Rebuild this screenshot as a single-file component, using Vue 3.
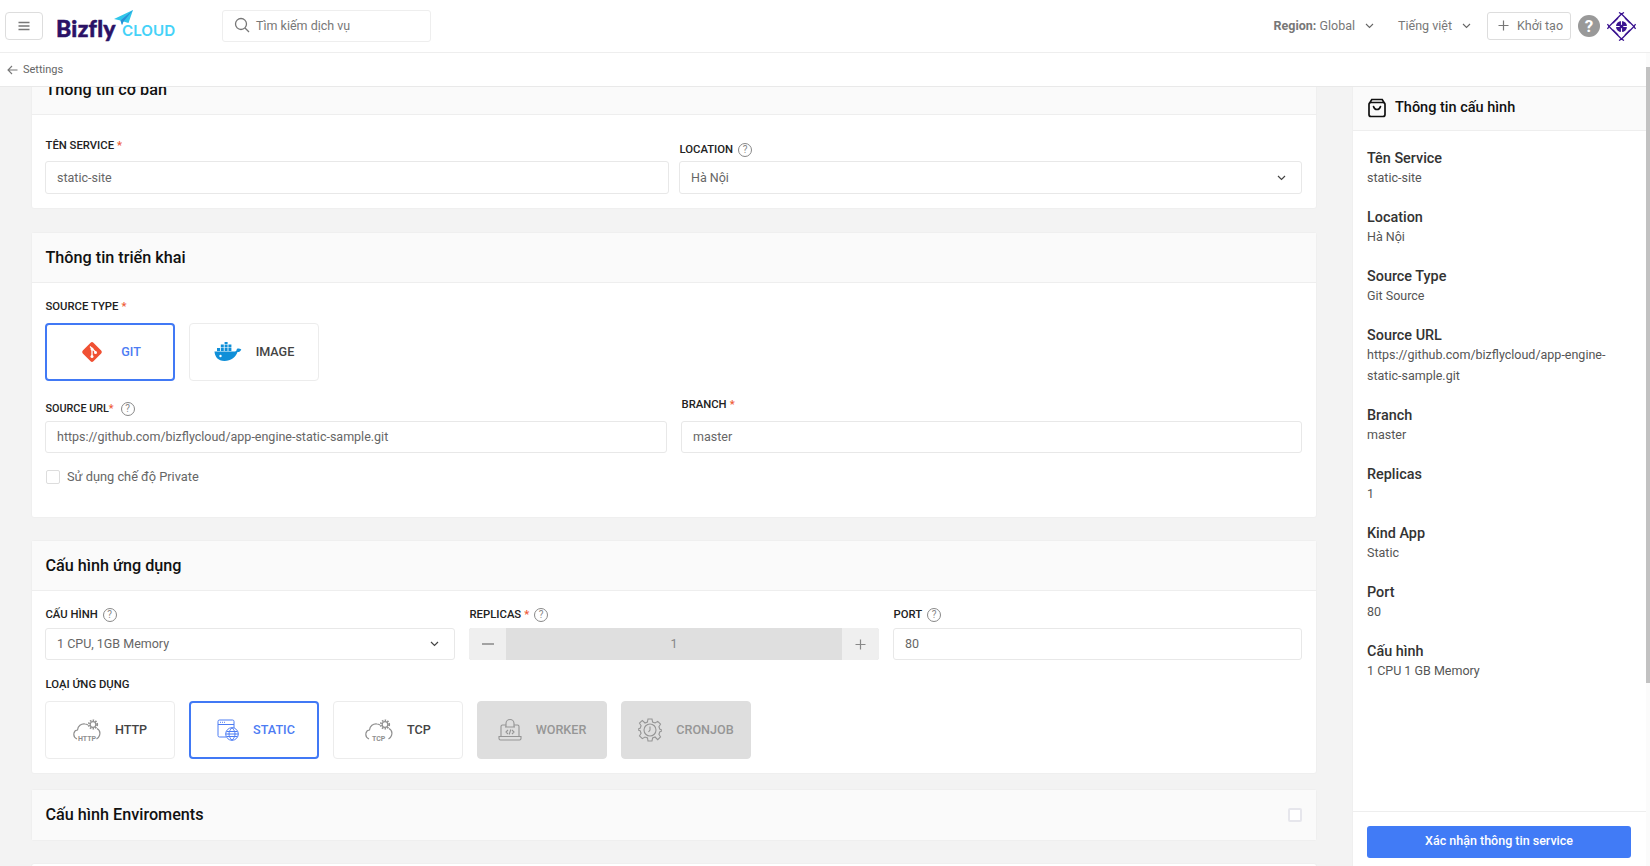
<script setup>
const basicInfo = [
  ['Tên Service', ['static-site']],
  ['Location', ['Hà Nội']],
  ['Source Type', ['Git Source']],
  ['Source URL', ['https://github.com/bizflycloud/app-engine-', 'static-sample.git']],
  ['Branch', ['master']],
  ['Replicas', ['1']],
  ['Kind App', ['Static']],
  ['Port', ['80']],
  ['Cấu hình', ['1 CPU 1 GB Memory']]
]
</script>

<template>
  <div class="page">
    <header class="top">
      <button class="menu" aria-label="menu">
        <svg width="12" height="10" viewBox="0 0 12 10"><path d="M.5 1.500h11M.5 5h11M.5 8.500h11" stroke="#777" stroke-width="1.400" fill="none"/></svg>
      </button>
      <div class="logo">
        <span class="biz">Bizfly</span>
        <span class="cloud">CLOUD</span>
        <svg class="plane" width="20" height="16" viewBox="0 0 20 16"><path d="M0 9 19 0 14.500 13 9.500 11.500 8 15 6.500 10.500Z" fill="#2fc6ea"/><path d="M6.500 10.500 19 0 9.500 11.500 8 15Z" fill="#2b8fd6"/></svg>
      </div>
      <div class="search">
        <svg width="16" height="16" viewBox="0 0 16 16" fill="none" stroke="#777" stroke-width="1.300"><circle cx="7" cy="7" r="5.500"/><path d="m11 11 4 4"/></svg>
        <span>Tìm kiếm dịch vụ</span>
      </div>
      <div class="spacer"></div>
      <div class="drop"><b>Region:</b>&nbsp;Global
        <svg class="chev" width="9" height="6" viewBox="0 0 9 6"><path d="m1 1 3.500 3.500L8 1" fill="none" stroke="#666" stroke-width="1.100"/></svg>
      </div>
      <div class="drop lang">Tiếng việt
        <svg class="chev" width="9" height="6" viewBox="0 0 9 6"><path d="m1 1 3.500 3.500L8 1" fill="none" stroke="#666" stroke-width="1.100"/></svg>
      </div>
      <div class="create">
        <svg width="11" height="11" viewBox="0 0 11 11"><path d="M5.500 .5v10M.5 5.500h10" stroke="#777" stroke-width="1.200"/></svg>
        <span>Khởi tạo</span>
      </div>
      <div class="qmark">?</div>
      <svg class="avatar" width="29" height="29" viewBox="0 0 29 29" fill="none" stroke="#3a1390" stroke-width="1.300">
        <path d="M14.500 2 27 14.500 14.500 27 2 14.500Z"/>
        <path d="M14.500 2 12 .5M14.500 2 17 .5M14.500 27 12 28.500M14.500 27 17 28.500M2 14.500 .5 12M2 14.500 .5 17M27 14.500 28.500 12M27 14.500 28.500 17"/>
        <path d="M6 11 11 6M18 6 23 11M6 18 11 23M18 23 23 18"/>
        <circle cx="14.500" cy="14.500" r="5.500" fill="#3a1390" stroke="none"/>
        <path d="M14.500 8v13M8 14.500h13" stroke="#fff" stroke-width="1.100"/>
        <circle cx="14.500" cy="14.500" r="1.800" fill="#3a1390" stroke="none"/>
      </svg>
    </header>

    <div class="crumb">
      <svg width="11" height="10" viewBox="0 0 11 10" fill="none" stroke="#777" stroke-width="1.100"><path d="M10.500 5H1M5 1 1 5l4 4"/></svg>
      <span>Settings</span>
    </div>

    <div class="track"><div class="thumb"></div></div>

    <div class="body">
      <main class="main">
        <section class="card first">
          <h2 class="card-head">Thông tin cơ bản</h2>
          <div class="card-body">
            <div class="row two">
              <div class="field">
                <label class="lab up4">TÊN SERVICE <i>*</i></label>
                <div class="input">static-site</div>
              </div>
              <div class="field">
                <label class="lab">LOCATION <span class="q">?</span></label>
                <div class="input select">Hà Nội
                  <svg width="9" height="6" viewBox="0 0 9 6"><path d="m1 1 3.500 3.500L8 1" fill="none" stroke="#444" stroke-width="1.200"/></svg>
                </div>
              </div>
            </div>
          </div>
        </section>

        <section class="card deploy">
          <h2 class="card-head">Thông tin triển khai</h2>
          <div class="card-body">
            <label class="lab plain">SOURCE TYPE <i>*</i></label>
            <div class="tiles">
              <div class="tile on git">
                <svg width="22" height="22" viewBox="0 0 22 22"><rect x="3.500" y="3.500" width="15" height="15" rx="2" transform="rotate(45 11 11)" fill="#f05033"/><path d="M9 5.500 15 11.500M11 8v8" stroke="#fff" stroke-width="1.300"/><circle cx="11" cy="8" r="1.500" fill="#fff"/><circle cx="11" cy="15.500" r="1.500" fill="#fff"/><circle cx="14.500" cy="11.500" r="1.500" fill="#fff"/></svg>
                <span>GIT</span>
              </div>
              <div class="tile">
                <svg width="28" height="20" viewBox="0 0 28 20" fill="#0f8fd8"><path d="M.5 9.500h20.500c1-.2 1.800-1.200 1.800-2.600 1.300-.8 3-.6 4.500.5-.6 1.700-2 2.600-3.800 2.600C21.500 15.500 17 19 10.500 19 4 19 .8 14.500.5 9.500Z"/><path d="M3 6h3v3H3zM6.800 6h3v3h-3zM10.600 6h3v3h-3zM14.400 6h3v3h-3zM6.800 2.500h3v3h-3zM10.600 2.500h3v3h-3zM14.400 2.500h3v3h-3zM10.600-1h3v3h-3z"/><circle cx="6.500" cy="14" r="1.200" fill="#fff"/></svg>
                <span>IMAGE</span>
              </div>
            </div>
            <div class="row two-b">
              <div class="field">
                <label class="lab url">SOURCE URL<i>*</i> <span class="q">?</span></label>
                <div class="input">https://github.com/bizflycloud/app-engine-static-sample.git</div>
              </div>
              <div class="field">
                <label class="lab branch">BRANCH <i>*</i></label>
                <div class="input">master</div>
              </div>
            </div>
            <div class="check-row"><span class="box"></span><span>Sử dụng chế độ Private</span></div>
          </div>
        </section>

        <section class="card app">
          <h2 class="card-head">Cấu hình ứng dụng</h2>
          <div class="card-body">
            <div class="row three">
              <div class="field">
                <label class="lab">CẤU HÌNH <span class="q">?</span></label>
                <div class="input select">1 CPU, 1GB Memory
                  <svg width="9" height="6" viewBox="0 0 9 6"><path d="m1 1 3.500 3.500L8 1" fill="none" stroke="#444" stroke-width="1.200"/></svg>
                </div>
              </div>
              <div class="field">
                <label class="lab">REPLICAS <i>*</i> <span class="q">?</span></label>
                <div class="stepper">
                  <span class="step">
                    <svg width="12" height="2" viewBox="0 0 12 2"><path d="M0 1h12" stroke="#888" stroke-width="1.400"/></svg>
                  </span>
                  <span class="num">1</span>
                  <span class="step">
                    <svg width="11" height="11" viewBox="0 0 11 11"><path d="M5.500 .5v10M.5 5.500h10" stroke="#888" stroke-width="1.200"/></svg>
                  </span>
                </div>
              </div>
              <div class="field">
                <label class="lab">PORT <span class="q">?</span></label>
                <div class="input">80</div>
              </div>
            </div>
            <label class="lab plain kind">LOẠI ỨNG DỤNG</label>
            <div class="tiles">
              <div class="tile">
                <svg class="kicon" width="28" height="22" viewBox="0 0 28 22" fill="none" stroke="#8f8f8f" stroke-width="1.200"><path d="M4 20C1.500 19 .5 16.500 1 14c.5-2 2-3 3.500-3C5 7 8 4.500 12 5c1 0 2 .4 3 1M24 9.500c2.500 1.500 3.500 4 2.500 7-.5 1.500-1.500 2.500-3 3.500"/><circle cx="20" cy="5.500" r="2.800"/><circle cx="20" cy="5.500" r="4.200" stroke-dasharray="1.500 1.200" stroke-width="1.800"/><text x="5" y="21.500" class="mini">HTTP</text></svg>
                <span>HTTP</span>
              </div>
              <div class="tile on static">
                <svg class="kicon" width="22" height="22" viewBox="0 0 22 22" fill="none" stroke="#4d7cf3" stroke-width="1"><path d="M9 18H2.500A1.500 1.500 0 0 1 1 16.500V2.500A1.500 1.500 0 0 1 2.500 1h13A1.500 1.500 0 0 1 17 2.500V9M1 5.500h16"/><path d="M3 3.300h1M5 3.300h1M7 3.300h1"/><circle cx="15" cy="15" r="6.300" fill="#fff"/><path d="M8.700 15h12.600M9.500 12.500h11M9.500 17.500h11M15 8.700c-4 4-4 8.600 0 12.600M15 8.700c4 4 4 8.600 0 12.600"/></svg>
                <span>STATIC</span>
              </div>
              <div class="tile">
                <svg class="kicon" width="28" height="22" viewBox="0 0 28 22" fill="none" stroke="#8f8f8f" stroke-width="1.200"><path d="M4 20C1.500 19 .5 16.500 1 14c.5-2 2-3 3.500-3C5 7 8 4.500 12 5c1 0 2 .4 3 1M24 9.500c2.500 1.500 3.500 4 2.500 7-.5 1.500-1.500 2.500-3 3.500"/><circle cx="20" cy="5.500" r="2.800"/><circle cx="20" cy="5.500" r="4.200" stroke-dasharray="1.500 1.200" stroke-width="1.800"/><text x="7" y="21.500" class="mini">TCP</text></svg>
                <span>TCP</span>
              </div>
              <div class="tile off">
                <svg class="kicon" width="24" height="24" viewBox="0 0 24 24" fill="none" stroke="#959595" stroke-width="1.100"><path d="M3 18V8.500A1.500 1.500 0 0 1 4.500 7H8M16 7h3.500A1.500 1.500 0 0 1 21 8.500V18M1 18.500h22v2A1.500 1.500 0 0 1 21.500 22h-19A1.500 1.500 0 0 1 1 20.500Z"/><path d="M8 9V5.500a4 4 0 0 1 8 0V9M7 9h10"/><path d="m10 12-2 2 2 2M14 12l2 2-2 2M12.800 11.500l-1.600 5"/></svg>
                <span>WORKER</span>
              </div>
              <div class="tile off">
                <svg class="kicon" width="24" height="24" viewBox="0 0 24 24" fill="none" stroke="#959595" stroke-width="1.100"><path d="M10 1h4l.6 3 2.500 1 2.600-1.600 2.800 2.800L20.900 8.800l1 2.500 2 .7v1l-2 .7-1 2.500 1.600 2.600-2.800 2.800L17.100 19l-2.500 1-.6 3h-4l-.5-3L7 19l-2.700 1.600-2.800-2.800 1.600-2.600-1-2.500-2-.7v-1l2-.7 1-2.500-1.600-2.600 2.800-2.800L7 5l2.400-1Z"/><circle cx="12" cy="12" r="6"/><path d="M12 8.500V12l-1.500 2"/></svg>
                <span>CRONJOB</span>
              </div>
            </div>
          </div>
        </section>

        <section class="card env">
          <h2 class="card-head">Cấu hình Enviroments <span class="box"></span></h2>
        </section>
        <section class="card next"></section>
      </main>

      <aside class="side">
        <div class="side-head">
          <svg width="20" height="20" viewBox="0 0 20 20" fill="none" stroke="#111" stroke-width="1.700"><rect x="2" y="4.500" width="16" height="14" rx="2"/><path d="M3 4.500 4.800 1.500h10.400L17 4.500M6.500 8.500c.6 2 2 3 3.500 3s2.900-1 3.500-3" stroke-linecap="round"/></svg>
          <span>Thông tin cấu hình</span>
        </div>
        <div class="side-list">
          <div v-for="item in basicInfo" :key="item[0]" class="side-item">
            <div class="side-title">{{ item[0] }}</div>
            <div v-for="line in item[1]" :key="line" class="side-value">{{ line }}</div>
          </div>
        </div>
        <div class="side-foot">
          <button class="confirm">Xác nhận thông tin service</button>
        </div>
      </aside>
    </div>
  </div>
</template>

<style>
html, body { margin: 0; height: 100%; overflow: hidden; }
</style>

<style scoped>
.page { position: relative; height: 866px; display: flex; flex-direction: column; overflow: hidden; font-family: Roboto, "Noto Sans", sans-serif; color: #555; font-size: 12.5px; background: #f3f3f3; }
.top { height: 52px; flex: none; display: flex; align-items: center; padding: 0 14px 0 5px; background: #fff; border-bottom: 1px solid #eee; box-sizing: content-box; }
.menu { width: 38px; height: 28px; margin: 0; padding: 0; display: flex; align-items: center; justify-content: center; border: 1px solid #ddd; border-radius: 4px; background: #fff; }
.logo { position: relative; width: 120px; margin-left: 14px; height: 36px; }
.biz { position: absolute; left: -1px; top: 6px; font: 900 23px/28px Lato, Inter, sans-serif; color: #2b1266; -webkit-text-stroke: .5px #2b1266; letter-spacing: .3px; }
.cloud { position: absolute; left: 65px; top: 13px; font: 600 15.200px/20px Inter, sans-serif; color: #45d2f8; }
.plane { position: absolute; left: 57px; top: 2px; }
.search { width: 209px; height: 32px; box-sizing: border-box; margin-left: 45px; display: flex; align-items: center; gap: 6px; padding: 0 0 2px 11px; border: 1px solid #eee; border-radius: 3px; color: #777; }
.spacer { flex: 1; }
.drop { display: flex; align-items: center; color: #777; padding-bottom: 2px; }
.drop b { font-weight: 700; color: #777; }
.drop .chev { margin: 2px 0 0 10px; }
.lang { margin-left: 24px; }
.create { height: 28px; width: 84px; box-sizing: border-box; margin-left: 16px; display: flex; align-items: center; gap: 8px; padding: 0 0 2px 10px; border: 1px solid #ddd; border-radius: 3px; color: #777; }
.qmark { width: 22px; height: 22px; margin-left: 7px; border-radius: 50%; background: #999; color: #fff; font: 700 17px/22px Roboto, sans-serif; text-align: center; }
.avatar { margin-left: 7px; }
.crumb { height: 34px; flex: none; display: flex; align-items: center; gap: 5px; padding-left: 7px; background: #fff; border-bottom: 1px solid #e9e9e9; font-size: 11px; color: #666; box-sizing: border-box; }
.track { position: absolute; right: 0; top: 53px; bottom: 0; width: 4px; background: #fbfbfb; }
.thumb { margin-top: 14px; height: 616px; background: #c2c2c2; }
.body { flex: 1; min-height: 0; display: flex; overflow: hidden; }
.main { width: 1286px; margin-left: 31px; flex: none; }
.card { background: #fff; border: 1px solid #efefef; border-radius: 3px; margin-bottom: 22px; box-sizing: border-box; }
.card-head { margin: 0; height: 50px; display: flex; align-items: center; justify-content: space-between; padding: 0 14px 0 13.500px; background: #fafafa; border-bottom: 1px solid #eee; font: 500 16.200px/20px Roboto, sans-serif; color: #111; box-sizing: border-box; }
.first { margin-top: -25px; height: 147px; margin-bottom: 23px; }
.first .card-head { height: 52px; padding-top: 2px; }
.first .lab { margin-bottom: 0; }
.first .input { height: 33px; padding-bottom: 0; }
.card-body { padding: 0 14px 0 13px; }
.row { display: grid; }
.two { grid-template-columns: 624px 623px; gap: 10px; padding-top: 24px; }
.two-b { grid-template-columns: 622px 621px; gap: 14px; margin-top: 17px; }
.three { grid-template-columns: 410px 410px 409px; gap: 14px; }
.three .lab { transform: translateY(-1px); }
.field { display: flex; flex-direction: column; justify-content: flex-end; }
.lab { display: flex; align-items: center; gap: 3px; height: 22px; padding-left: .5px; font: 500 11.300px/14px Roboto, sans-serif; color: #222; margin-bottom: 1px; }
.lab i { color: #ee5a35; font-style: normal; }
.q { width: 14px; height: 14px; box-sizing: border-box; margin-left: 2px; border: 1px solid #888; border-radius: 50%; font: 400 10px/12px Roboto, sans-serif; color: #888; text-align: center; }
.input { height: 32px; display: flex; align-items: center; justify-content: space-between; box-sizing: border-box; padding: 0 15px 1px 11px; border: 1px solid #e8e8e8; border-radius: 3px; color: #666; background: #fff; }
.up4 { transform: translateY(-4px); }
.plain { margin: 0; }
.deploy { height: 286px; }
.deploy .card-body { padding-top: 13px; }
.tiles { display: flex; gap: 14px; margin-top: 5px; }
.tile { width: 130px; height: 58px; box-sizing: border-box; display: flex; align-items: center; justify-content: center; gap: 14px; border: 1px solid #ececec; border-radius: 4px; font: 500 12.600px/16px Roboto, sans-serif; color: #444; background: #fff; }
.tile.on { border: 2px solid #4179f5; color: #4d7cf3; }
.tile.git { gap: 18px; padding-left: 2px; }
.tile.static { padding-left: 4px; }
.tile.off { background: #dedede; border-color: #dedede; color: #969696; }
.url { font-size: 10.800px; }
.url i { margin-left: -3px; }
.url .q { margin-left: 4px; }
.branch { transform: translateY(-4px); }
.check-row { display: flex; align-items: center; gap: 7px; margin: 17px 0 0 1px; line-height: 14px; color: #666; font-size: 12.800px; }
.box { display: block; width: 14px; height: 14px; border: 1px solid #ddd; border-radius: 2px; box-sizing: border-box; background: #fff; }
.app { height: 234px; margin-bottom: 15px; }
.app .card-body { padding-top: 14px; }
.stepper { height: 32px; display: flex; border-radius: 3px; overflow: hidden; background: #dfdfdf; }
.step { width: 37px; display: flex; align-items: center; justify-content: center; background: #efefef; }
.num { flex: 1; text-align: center; line-height: 31px; color: #888; }
.kind { margin-top: 14px; }
.tiles .kicon { flex: none; }
.mini { font: 700 7px Roboto, sans-serif; fill: #8f8f8f; stroke: none; }
.env { height: 52px; margin-bottom: 22px; }
.env .card-head { border-bottom: 0; height: 100%; }
.env .box { border: 2px solid #e6e6ec; }
.next { height: 60px; }
.side { width: 294px; margin-left: 35px; flex: none; background: #fff; display: flex; flex-direction: column; border-left: 1px solid #efefef; box-sizing: border-box; }
.side-head { height: 44px; flex: none; display: flex; align-items: center; gap: 8px; padding: 0 0 2px 14px; background: #fafafa; border-bottom: 1px solid #eee; box-sizing: border-box; font: 500 14.500px/18px Roboto, sans-serif; color: #111; }
.side-list { flex: 1; padding: 19px 14px 0; }
.side-item { margin-bottom: 21px; }
.side-title { font: 500 14.400px/17px Roboto, sans-serif; color: #333; }
.side-value { font: 400 12.500px/21px Roboto, sans-serif; color: #555; }
.side-foot { height: 55px; flex: none; padding: 14px 15px 0 14px; border-top: 1px solid #eee; box-sizing: border-box; }
.confirm { display: block; width: 100%; height: 32px; padding: 0 0 3px; border: 0; border-radius: 3px; background: #417bf6; color: #fff; font: 500 12.500px Roboto, sans-serif; }
</style>
